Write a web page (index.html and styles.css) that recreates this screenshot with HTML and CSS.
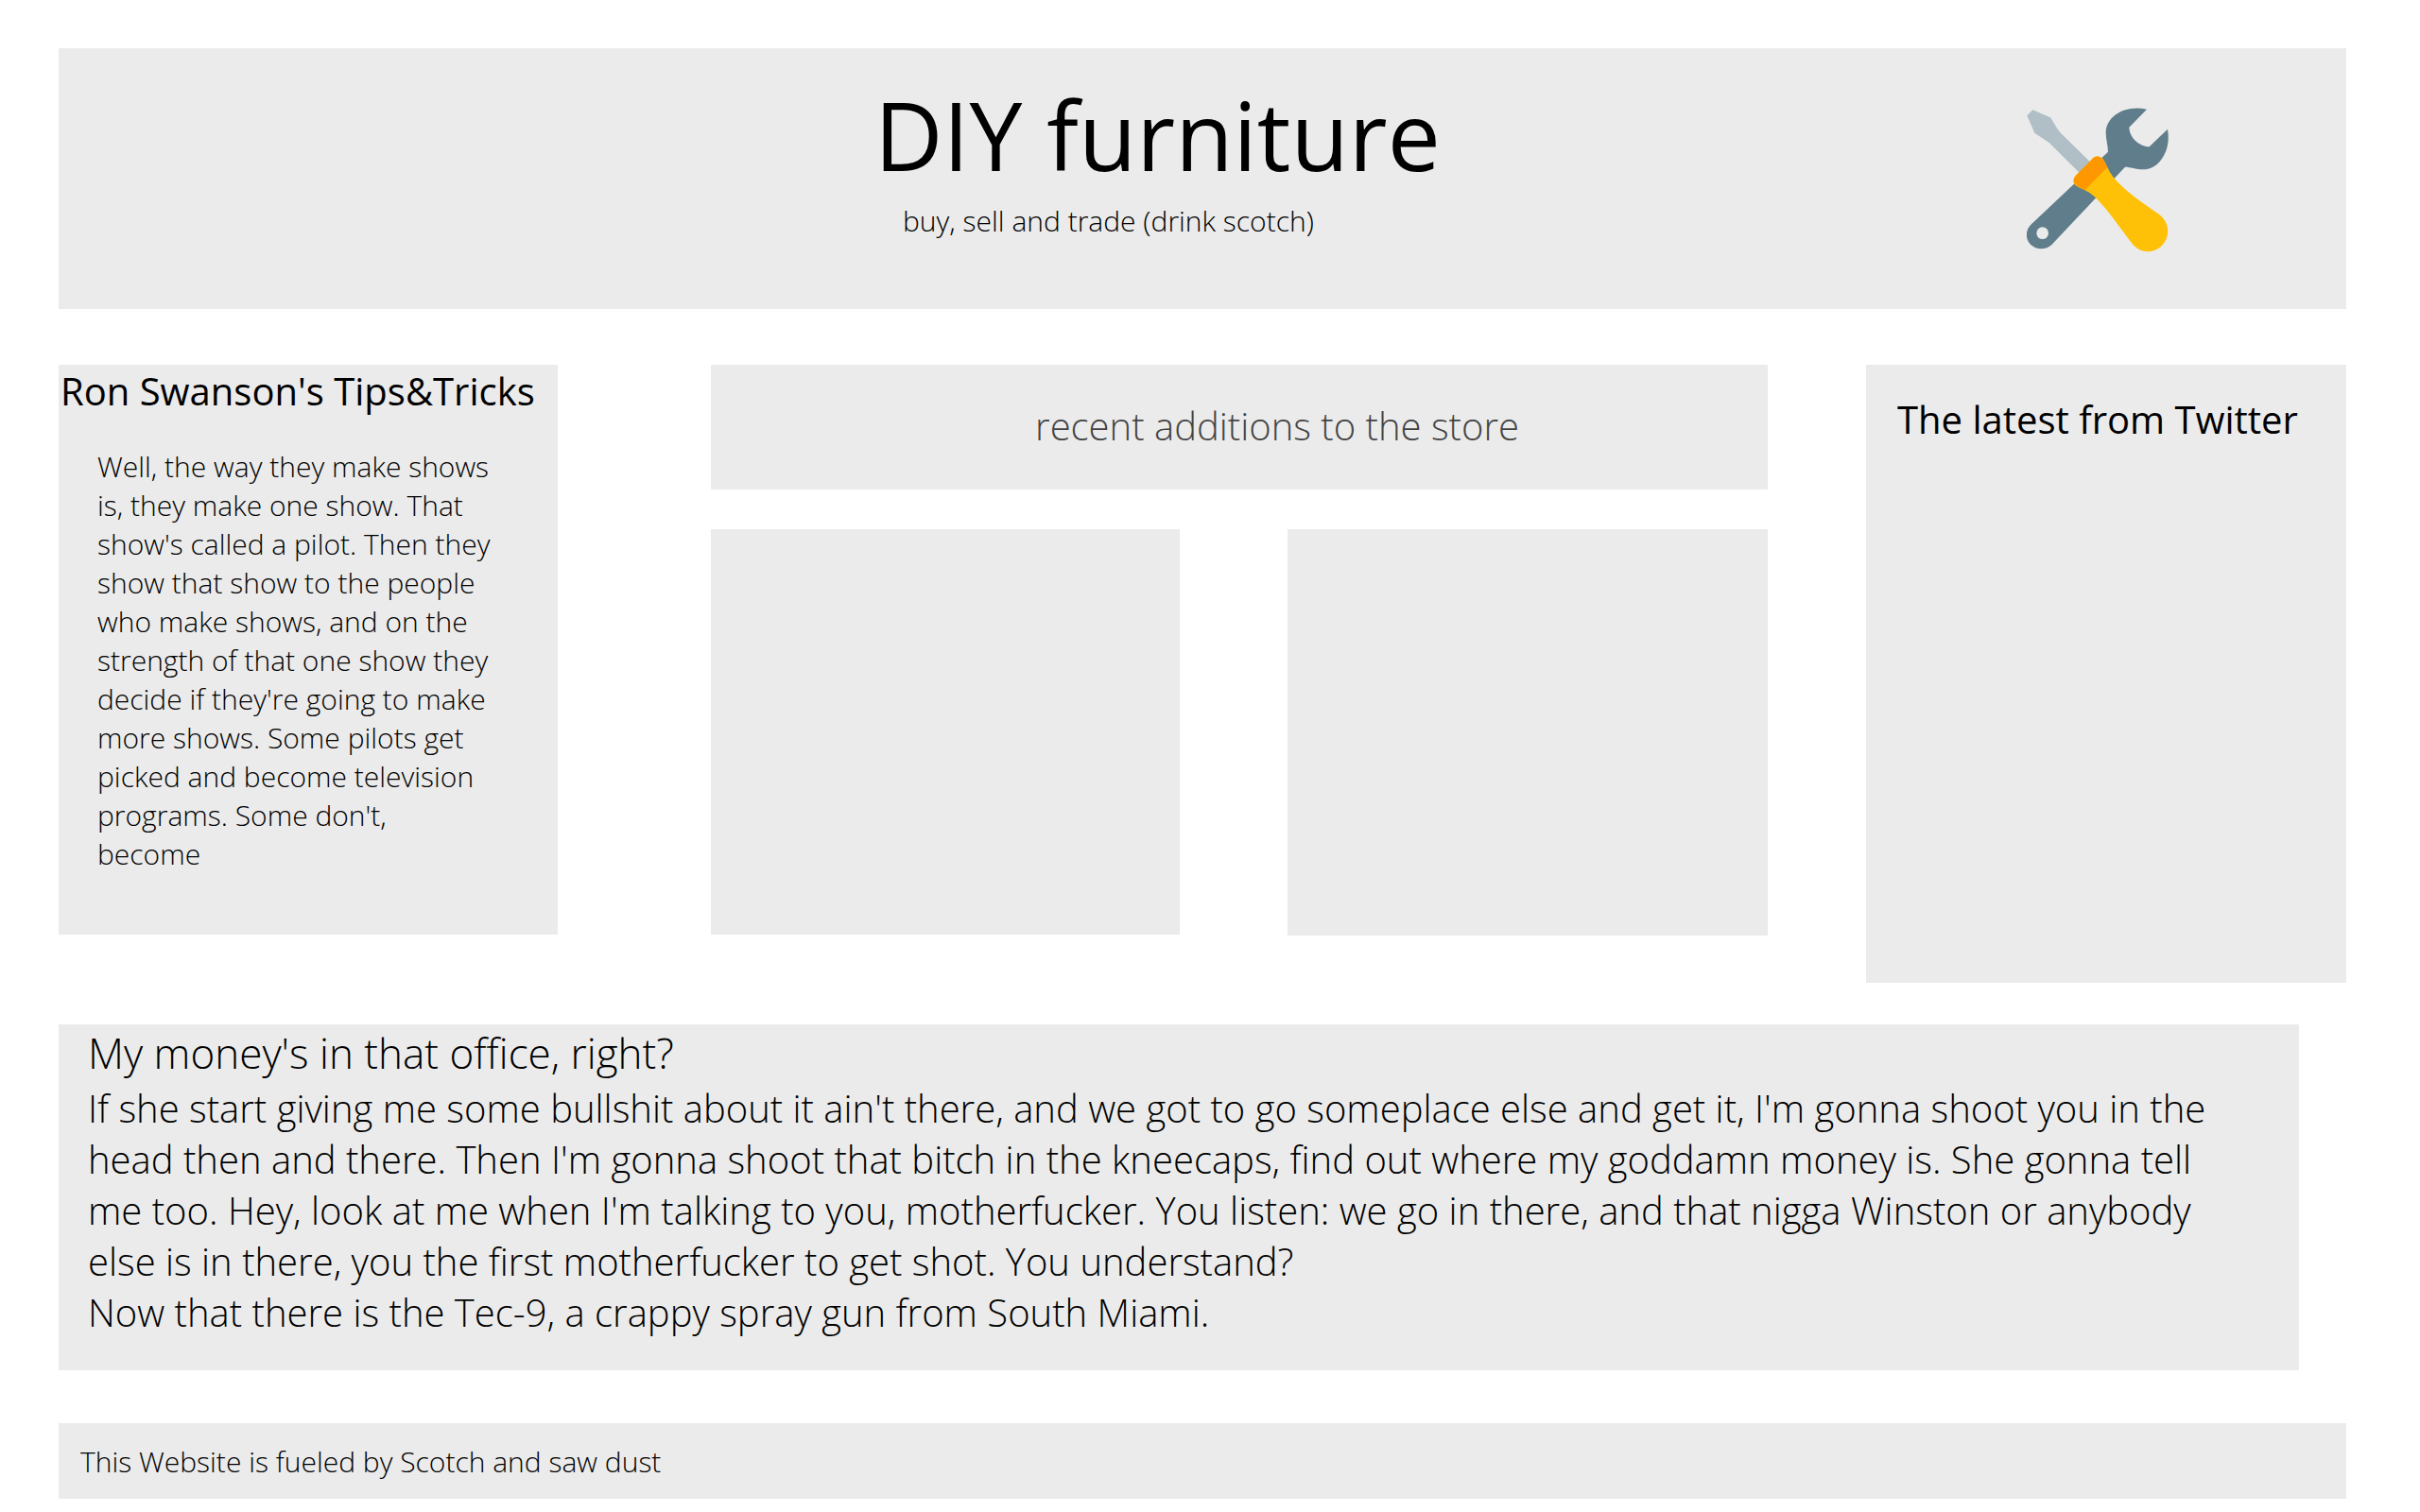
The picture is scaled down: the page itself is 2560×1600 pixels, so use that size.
FILE: index.html
```html
<!DOCTYPE html>
<html lang="en">
<head>
<meta charset="utf-8">
<title>DIY furniture</title>
<link rel="stylesheet" href="styles.css">
</head>
<body>
<header class="masthead panel">
  <div class="brand">
    <h1 class="brand-name">DIY furniture</h1>
    <p class="tagline">buy, sell and trade (drink scotch)</p>
  </div>
  <svg class="logo" viewBox="132 101 450 459" role="img" aria-label="Wrench and screwdriver">
    <path fill="#607d8b" d="M513 106C440 91 384 130 383 180C383 203 390 222 390 241L145 472C127 490 127 519 145 536C163 553 193 553 212 535L444 289C460 289 478 297 502 297C548 297 592 242 579 169L521 225C488 223 458 196 457 163Z"/>
    <circle cx="182" cy="499" r="19" fill="#ebebeb"/>
    <path fill="#b0bec5" d="M151 108L207 132C216 145 227 167 238 180L345 285L311 319L204 213L157 181L133 126Z"/>
    <path fill="#ffc107" d="M345 259C358 251 371 256 378 270C389 290 394 307 410 325C449 370 505 406 549 437C581 460 589 499 568 530C544 564 495 568 467 533C439 499 394 430 351 387C333 369 314 362 297 354C277 344 274 331 289 315Z"/>
    <path fill="#ff9800" d="M343 260C359 250 370 259 377 270C382 278 384 285 387 291L317 362L297 352C278 343 277 328 289 315Z"/>
  </svg>
</header>

<main>
  <div class="columns">
    <aside class="tips panel">
      <h2 class="panel-title">Ron Swanson's Tips&amp;Tricks</h2>
      <p class="tips-text">Well, the way they make shows is, they make one show. That show's called a pilot. Then they show that show to the people who make shows, and on the strength of that one show they decide if they're going to make more shows. Some pilots get picked and become television programs. Some don't, become</p>
    </aside>
    <section class="store">
      <h2 class="store-title panel">recent additions to the store</h2>
      <div class="items">
        <div class="item panel"></div>
        <div class="item item-wide panel"></div>
      </div>
    </section>
    <aside class="twitter panel">
      <h2 class="panel-title">The latest from Twitter</h2>
    </aside>
  </div>

  <article class="story panel">
    <h2 class="story-title">My money's in that office, right?</h2>
    <p>If she start giving me some bullshit about it ain't there, and we got to go someplace else and get it, I'm gonna shoot you in the head then and there. Then I'm gonna shoot that bitch in the kneecaps, find out where my goddamn money is. She gonna tell me too. Hey, look at me when I'm talking to you, motherfucker. You listen: we go in there, and that nigga Winston or anybody else is in there, you the first motherfucker to get shot. You understand?</p>
    <p>Now that there is the Tec-9, a crappy spray gun from South Miami.</p>
  </article>
</main>

<footer class="footer panel">This Website is fueled by Scotch and saw dust</footer>
</body>
</html>
```
FILE: styles.css
```css
* {
  box-sizing: border-box;
}

body {
  margin: 0;
  padding: 51px 78px 14px 62px;
  background: #fff;
  color: #000;
  font-family: "Open Sans", "Noto Sans", sans-serif;
  font-size: 30px;
  font-weight: 300;
  line-height: 41px;
}

h1,
h2,
p {
  margin: 0;
}

.panel {
  background: #ebebeb;
}

.masthead {
  display: grid;
  grid-template-columns: 863fr 1219fr 338fr;
  align-items: start;
  padding: 23px 0 60px;
}

.brand {
  grid-column: 2;
}

.brand-name {
  font-size: 100px;
  font-weight: 400;
  line-height: 136px;
}

.tagline {
  padding: 3px 0 0 30px;
}

.logo {
  width: 150px;
  height: 153px;
  margin-top: 40px;
}

.columns {
  display: grid;
  grid-template-columns: 528fr 162fr 1118fr 104fr 508fr;
  align-items: start;
  margin-top: 59px;
}

.panel-title {
  font-size: 40px;
  font-weight: 400;
  line-height: 54px;
  white-space: nowrap;
}

.tips {
  padding: 1px 0 0 2px;
}

.tips-text {
  padding: 32px 69px 65px 39px;
}

.store {
  grid-column: 3;
}

.store-title {
  padding: 38px 0 40px 80px;
  color: #444;
  font-size: 40px;
  font-weight: 300;
  line-height: 54px;
  text-align: center;
}

.items {
  display: grid;
  grid-template-columns: 496fr 508fr;
  gap: 114px;
  margin-top: 42px;
}

.item {
  height: 429px;
}

.item-wide {
  height: 430px;
}

.twitter {
  grid-column: 5;
  min-height: 654px;
  padding: 31px 33px;
}

.story {
  margin: 44px 50px 0 0;
  padding: 1px 64px 34px 31px;
  font-size: 40px;
  line-height: 54px;
}

.story-title {
  padding-bottom: 3px;
  font-size: 44px;
  font-weight: 300;
  line-height: 58px;
}

.footer {
  margin-top: 56px;
  padding: 20px 23px 19px;
}
```
